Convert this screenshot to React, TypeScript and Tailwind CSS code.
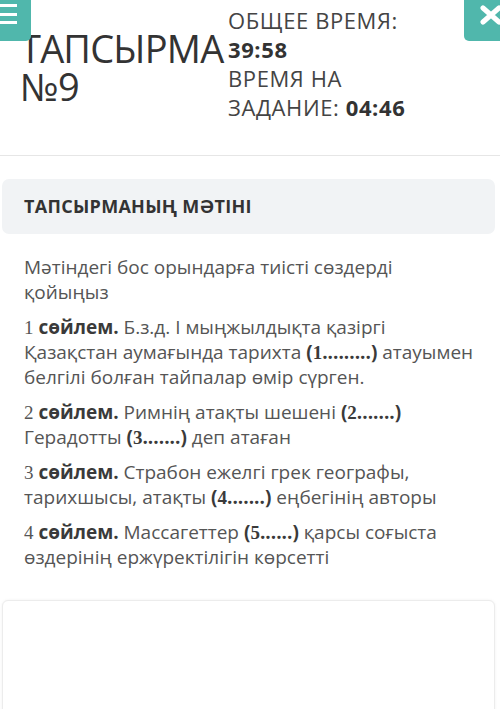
const num = 'font-["Liberation_Serif",serif]'

function Sentence({ n, children }: { n: number; children: React.ReactNode }) {
  return (
    <p className="mt-[10px]">
      <span className={num}>{n}</span> <b className="font-bold text-[#3a3a3a]">сөйлем.</b> {children}
    </p>
  )
}

function Gap({ n, dots }: { n: number; dots: string }) {
  return (
    <b className="font-bold text-[#3a3a3a]">
      (<span className={num}>{n}</span>
      {dots})
    </b>
  )
}

export default function App() {
  return (
    <div className="relative min-h-[709px] overflow-hidden bg-white font-['Open_Sans',sans-serif] text-[#444]">
      {/* Menu button, partly scrolled off */}
      <button className="absolute left-0 top-0 z-10 h-[41px] w-[31px] rounded-br-[5px] bg-[#50b7ac]">
        <span className="absolute left-0 top-[4px] h-[3px] w-[17px] bg-white" />
        <span className="absolute left-0 top-[13px] h-[3px] w-[17px] bg-white" />
        <span className="absolute left-0 top-[21px] h-[3px] w-[17px] bg-white" />
      </button>

      {/* Close button */}
      <button className="absolute left-[464px] top-0 z-10 h-[41px] w-[36px] rounded-bl-[5px] bg-[#50b7ac]">
        <svg className="absolute left-[16px] top-[5px]" width="22" height="20" viewBox="0 0 22 20">
          <path d="M3 3 L19 17 M19 3 L3 17" stroke="white" strokeWidth="5" strokeLinecap="round" />
        </svg>
      </button>

      {/* Header */}
      <header className="flex h-[156px] border-b border-[#e6e6e6]">
        <div className="w-[228px] shrink-0 pl-[20px] pt-[29px]">
          <h1 className="whitespace-nowrap text-[38px] font-normal leading-[38px] tracking-[-0.8px] text-[#333]">
            ТАПСЫРМА
            <br />
            №9
          </h1>
        </div>
        <div className="pt-[6px] text-[22px] leading-[29px] tracking-[0.6px] text-[#444]">
          <div>ОБЩЕЕ ВРЕМЯ:</div>
          <div className="font-bold text-[#333]">39:58</div>
          <div>ВРЕМЯ НА</div>
          <div>
            ЗАДАНИЕ: <span className="font-bold text-[#333]">04:46</span>
          </div>
        </div>
      </header>

      {/* Task text */}
      <section className="mt-[23px]">
        <div className="ml-[2px] mr-[5px] flex h-[55px] items-center rounded-[7px] bg-[#f1f3f5] px-[22px]">
          <h2 className="text-[18px] font-bold tracking-[0.3px] text-[#333]">ТАПСЫРМАНЫҢ МӘТІНІ</h2>
        </div>

        <div className="pl-[24px] pr-[22px] pt-[21px] text-[19px] leading-[25px] text-[#555]">
          <p>Мәтіндегі бос орындарға тиісті сөздерді қойыңыз</p>
          <Sentence n={1}>
            Б.з.д. І мыңжылдықта қазіргі Қазақстан аумағында тарихта <Gap n={1} dots="........." /> атауымен
            белгілі болған тайпалар өмір сүрген.
          </Sentence>
          <Sentence n={2}>
            Римнің атақты шешені <Gap n={2} dots="......." /> Герадотты <Gap n={3} dots="......." /> деп атаған
          </Sentence>
          <Sentence n={3}>
            Страбон ежелгі грек географы, тарихшысы, атақты <Gap n={4} dots="......." /> еңбегінің авторы
          </Sentence>
          <Sentence n={4}>
            Массагеттер <Gap n={5} dots="......" /> қарсы соғыста өздерінің ержүректілігін көрсетті
          </Sentence>
        </div>
      </section>

      {/* Answer card */}
      <div className="ml-[2px] mr-[5px] mt-[30px] h-[200px] rounded-[6px] border border-[#ececec] bg-white shadow-[0_0_3px_rgba(0,0,0,0.06)]" />
    </div>
  )
}
